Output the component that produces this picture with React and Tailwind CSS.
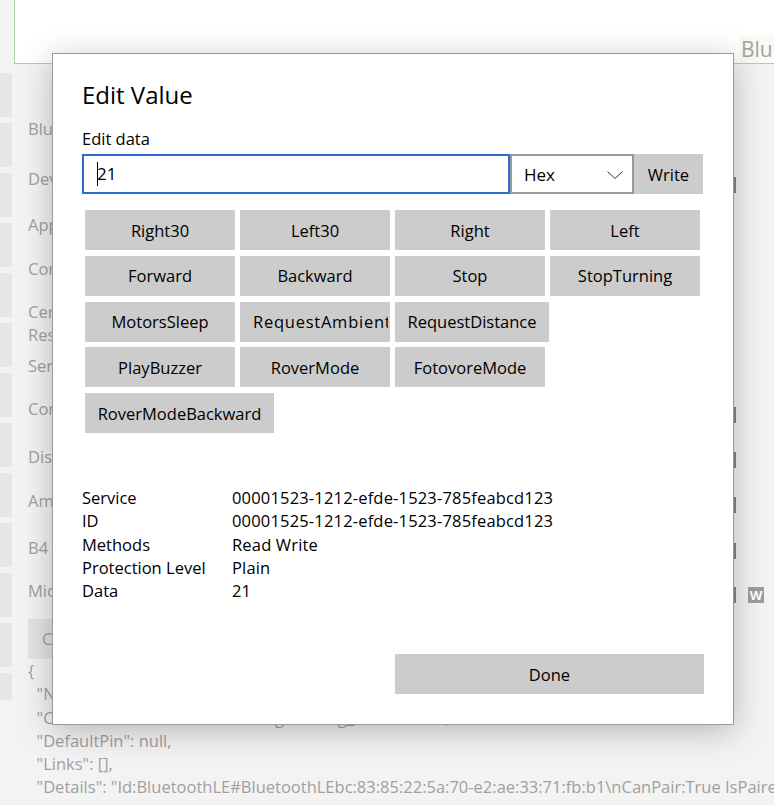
import React from "react";

const bgRows = [
  { label: "Bluetooth Address", h: "h-[46px]" },
  { label: "Device Name", h: "h-[54px]", mark: "translate-y-[7px]" },
  { label: "Appearance", h: "h-[38px]" },
  { label: "Connection Status", h: "h-[50px]" },
  { label: "Certificate\nResponse", h: "h-[59px]", two: true },
  { label: "Services", h: "h-[26px]" },
  { label: "Connected", h: "h-[60px]", mark: "translate-y-[7px]" },
  { label: "Distance", h: "h-[36px]", mark: "translate-y-[4px]" },
  { label: "Ambient Light", h: "h-[52px]", mark: "translate-y-[5px]" },
  { label: "B4 Value", h: "h-[42px]", mark: "translate-y-[4px]" },
  { label: "Microphone", h: "h-[44px]", mark: "translate-y-[5px]", w: true },
];

const btnRows = [
  [
    { t: "Right30", w: "w-[150px]" },
    { t: "Left30", w: "w-[150px]" },
    { t: "Right", w: "w-[150px]" },
    { t: "Left", w: "w-[150px]" },
  ],
  [
    { t: "Forward", w: "w-[150px]" },
    { t: "Backward", w: "w-[150px]" },
    { t: "Stop", w: "w-[150px]" },
    { t: "StopTurning", w: "w-[150px]" },
  ],
  [
    { t: "MotorsSleep", w: "w-[150px]" },
    { t: "RequestAmbientLight", w: "w-[150px]", clip: true },
    { t: "RequestDistance", w: "w-[154px]" },
  ],
  [
    { t: "PlayBuzzer", w: "w-[150px]" },
    { t: "RoverMode", w: "w-[150px]" },
    { t: "FotovoreMode", w: "w-[150px]" },
  ],
  [{ t: "RoverModeBackward", w: "w-[189px]" }],
];

const info = [
  ["Service", "00001523-1212-efde-1523-785feabcd123"],
  ["ID", "00001525-1212-efde-1523-785feabcd123"],
  ["Methods", "Read Write"],
  ["Protection Level", "Plain"],
  ["Data", "21"],
];

const json = [
  "{",
  '  "Name": "Rover",',
  '  "ClassName": "WilliamWeilerEngineering_bitcbc38b9",',
  '  "DefaultPin": null,',
  '  "Links": [],',
  '  "Details": "Id:BluetoothLE#BluetoothLEbc:83:85:22:5a:70-e2:ae:33:71:fb:b1\\nCanPair:True IsPaired:False",',
];

export default function App() {
  return (
    <div className="relative w-[774px] h-[805px] overflow-hidden bg-[#f3f3f3] font-['Open_Sans',sans-serif] text-[16.5px]">
      <div className="flex h-full">
        {/* left nav strip */}
        <div className="w-[12px] flex flex-col gap-[6px] pt-[73px]">
          {Array.from({ length: 12 }).map((_, i) => (
            <div key={i} className="h-[44px] bg-[#e6e6e6]" />
          ))}
          <div className="h-[27px] bg-[#e6e6e6]" />
        </div>
        <div className="w-[2px]" />
        {/* content */}
        <div className="flex-1 min-w-0 flex flex-col">
          <div className="h-[64px] bg-white border-l border-b border-[#a6d5a6] flex items-end justify-end">
            <div className="w-[34px] h-[28px] bg-[#fafaf3] overflow-hidden pl-[1px] text-[21px] leading-[28px] text-[#a3a3a3] whitespace-nowrap">
              Bluetooth
            </div>
          </div>
          <div className="h-[41px]" />
          {bgRows.map((r, i) => (
            <div key={i} className={`${r.h} flex items-center pl-[14px]`}>
              <div className="flex-1 min-w-0 text-[#a0a0a0] leading-[23px] whitespace-pre">
                {r.label}
              </div>
              <div className="w-[40px] h-full flex items-center">
                {r.mark ? (
                  <div className={`w-[2px] h-[16px] bg-[#858585] ${r.mark}`} />
                ) : (
                  <div className="w-[2px]" />
                )}
                {r.w && (
                  <div className="ml-[12px] translate-y-[5px] w-[16px] h-[16px] bg-[#9d9d9d] text-white text-[13px] font-bold leading-[16px] text-center">
                    W
                  </div>
                )}
              </div>
            </div>
          ))}
          <div className="pl-[14px] mt-[7px]">
            <div className="w-[110px] h-[40px] bg-[#e3e3e3] pl-[14px] flex items-center text-[#a0a0a0]">
              Copy
            </div>
          </div>
          <div className="pl-[14px] text-[#a0a0a0] leading-[23.3px] whitespace-pre">
            {json.map((l, i) => (
              <div key={i}>{l}</div>
            ))}
          </div>
        </div>
      </div>

      {/* dialog */}
      <div className="absolute left-[52px] top-[53px] w-[682px] h-[672px] bg-white border border-[#9a9a9a] shadow-[0_6px_30px_rgba(0,0,0,0.25)] flex flex-col px-[29px] pt-[25px] pb-[30px] text-black">
        <div className="text-[24px] leading-[32px]">Edit Value</div>
        <div className="mt-[17px] leading-[22px]">Edit data</div>
        <div className="mt-[4px] flex h-[40px]">
          <div className="w-[428px] h-[40px] border-2 border-[#2c6ecf] flex items-center pl-[13px] text-[17px]">
            <span className="inline-block w-px h-[24px] bg-black -mr-px" />
            <span>21</span>
          </div>
          <div className="w-[124px] h-[40px] border-2 border-[#999999] flex items-center justify-between pl-[12px] pr-[9px] pt-[1px] text-[17px]">
            <span>Hex</span>
            <svg width="16" height="8" viewBox="0 0 16 8" fill="none">
              <polyline points="0.5,0.5 8,7.5 15.5,0.5" stroke="#333333" strokeWidth="1" />
            </svg>
          </div>
          <div className="w-[69px] h-[40px] bg-[#cccccc] flex items-center justify-center pt-[2px]">
            Write
          </div>
        </div>
        <div className="mt-[16px] pl-[3px] flex flex-col gap-[5.75px]">
          {btnRows.map((row, i) => (
            <div key={i} className="flex gap-[5px]">
              {row.map((b) =>
                b.clip ? (
                  <div key={b.t} className={`${b.w} h-[40px] bg-[#cccccc] flex items-center pl-[13px] pt-[2px] whitespace-nowrap`}>
                    <span className="block w-[135px] overflow-hidden tracking-[0.75px]">{b.t}</span>
                  </div>
                ) : (
                  <div key={b.t} className={`${b.w} h-[40px] bg-[#cccccc] flex items-center justify-center pt-[2px] whitespace-nowrap`}>
                    {b.t}
                  </div>
                )
              )}
            </div>
          ))}
        </div>
        <div className="mt-[53px] grid grid-cols-[150px_1fr] leading-[23.25px]">
          {info.map(([k, v]) => (
            <React.Fragment key={k}>
              <div>{k}</div>
              <div className="tracking-[0.17px]">{v}</div>
            </React.Fragment>
          ))}
        </div>
        <div className="mt-auto self-end w-[309px] h-[40px] bg-[#cccccc] flex items-center justify-center pt-[2px]">
          Done
        </div>
      </div>
    </div>
  );
}
